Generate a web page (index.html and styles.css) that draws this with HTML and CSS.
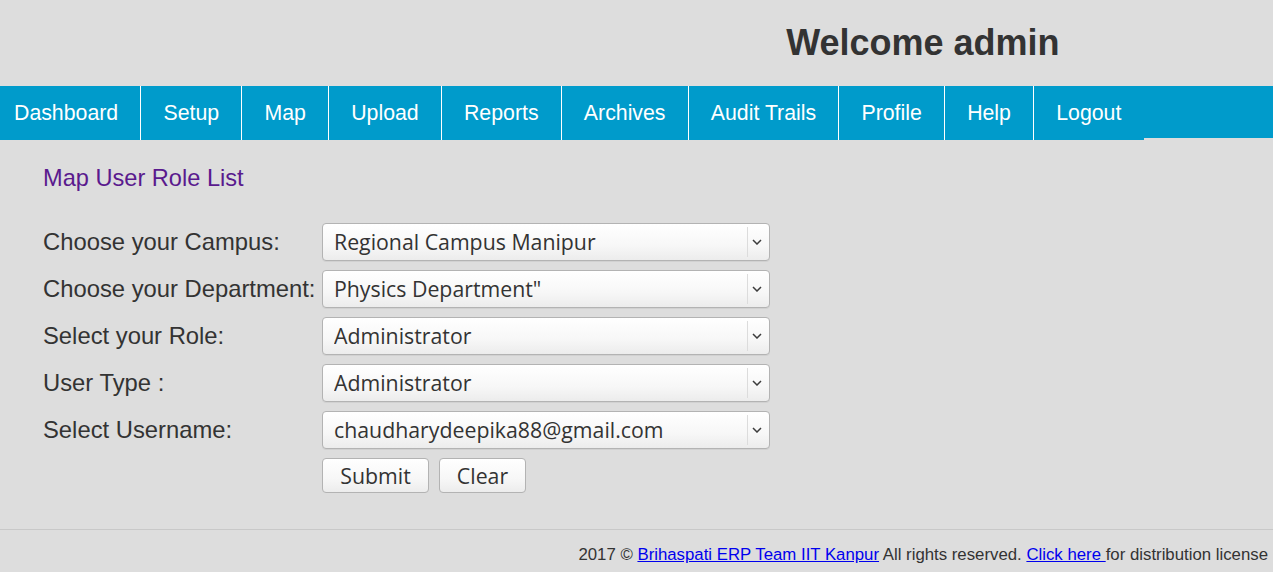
FILE: index.html
```html
<!DOCTYPE html>
<html>
<head>
<meta charset="utf-8">
<title>Map User Role List</title>
<link rel="stylesheet" href="styles.css">
</head>
<body>
<header class="header">
  <div class="header-left"></div>
  <h1 class="welcome">Welcome admin</h1>
</header>
<nav class="nav">
  <ul class="menu">
    <li class="menu-item first">Dashboard</li>
    <li class="menu-item">Setup</li>
    <li class="menu-item">Map</li>
    <li class="menu-item">Upload</li>
    <li class="menu-item">Reports</li>
    <li class="menu-item">Archives</li>
    <li class="menu-item">Audit Trails</li>
    <li class="menu-item">Profile</li>
    <li class="menu-item">Help</li>
    <li class="menu-item last">Logout</li>
  </ul>
</nav>
<main class="content">
  <h2 class="title">Map User Role List</h2>
  <form class="form">
    <label class="label">Choose your Campus:</label>
    <div class="select-wrap">
      <select class="select"><option>Regional Campus Manipur</option></select>
      <span class="sep"></span>
      <svg class="chev" width="10" height="6" viewBox="0 0 10 6"><path d="M1 1 L5 5 L9 1" fill="none" stroke="#3c3c3c" stroke-width="1.5"/></svg>
    </div>
    <label class="label">Choose your Department:</label>
    <div class="select-wrap">
      <select class="select"><option>Physics Department"</option></select>
      <span class="sep"></span>
      <svg class="chev" width="10" height="6" viewBox="0 0 10 6"><path d="M1 1 L5 5 L9 1" fill="none" stroke="#3c3c3c" stroke-width="1.5"/></svg>
    </div>
    <label class="label">Select your Role:</label>
    <div class="select-wrap">
      <select class="select"><option>Administrator</option></select>
      <span class="sep"></span>
      <svg class="chev" width="10" height="6" viewBox="0 0 10 6"><path d="M1 1 L5 5 L9 1" fill="none" stroke="#3c3c3c" stroke-width="1.5"/></svg>
    </div>
    <label class="label">User Type :</label>
    <div class="select-wrap">
      <select class="select"><option>Administrator</option></select>
      <span class="sep"></span>
      <svg class="chev" width="10" height="6" viewBox="0 0 10 6"><path d="M1 1 L5 5 L9 1" fill="none" stroke="#3c3c3c" stroke-width="1.5"/></svg>
    </div>
    <label class="label">Select Username:</label>
    <div class="select-wrap">
      <select class="select"><option>chaudharydeepika88@gmail.com</option></select>
      <span class="sep"></span>
      <svg class="chev" width="10" height="6" viewBox="0 0 10 6"><path d="M1 1 L5 5 L9 1" fill="none" stroke="#3c3c3c" stroke-width="1.5"/></svg>
    </div>
    <div class="spacer"></div>
    <div class="buttons">
      <button type="button" class="btn btn-submit">Submit</button>
      <button type="button" class="btn btn-clear">Clear</button>
    </div>
  </form>
</main>
<footer class="footer">
  <p class="footer-text">2017 © <a class="link" href="#">Brihaspati ERP Team IIT Kanpur</a> All rights reserved. <a class="link" href="#">Click here </a>for distribution license</p>
</footer>
</body>
</html>
```

FILE: styles.css
```css
html, body {
  margin: 0;
  padding: 0;
}
body {
  background: #dddddd;
  font-family: "Liberation Sans", Arial, sans-serif;
  color: #333333;
  height: 572px;
  overflow: hidden;
}
.header {
  display: grid;
  grid-template-columns: 45% 55%;
  height: 86px;
  box-sizing: border-box;
  padding-top: 25px;
}
.welcome {
  margin: 0;
  text-align: center;
  font-size: 36px;
  line-height: 36px;
  font-weight: bold;
  color: #333333;
}
.nav {
  height: 52px;
  background: #009bcb;
}
.menu {
  list-style: none;
  margin: 0;
  padding: 0;
  display: flex;
}
.menu-item {
  height: 54px;
  line-height: 54px;
  padding: 0 22.3px 0 22px;
  font-size: 21.3px;
  color: #ffffff;
  background: #009bcb;
  border-right: 1px solid #ffffff;
  white-space: nowrap;
}
.menu-item.first {
  padding-left: 14px;
}
.menu-item.last {
  border-right: none;
}
.content {
  padding: 26px 43px 0;
}
.title {
  margin: 0 0 31px;
  font-size: 23.6px;
  line-height: 28px;
  font-weight: normal;
  color: #5a1a8e;
}
.form {
  display: grid;
  grid-template-columns: 279px 448px;
  row-gap: 9px;
  align-items: center;
}
.label {
  font-size: 23.8px;
  color: #333333;
  white-space: nowrap;
}
.select-wrap {
  position: relative;
  height: 38px;
}
.select {
  -webkit-appearance: none;
  appearance: none;
  width: 448px;
  height: 38px;
  box-sizing: border-box;
  margin: 0;
  border: 1px solid #b3b3b3;
  border-radius: 4px;
  background: linear-gradient(#ffffff, #f7f7f7 60%, #ececec);
  box-shadow: 0 1px 0 rgba(0,0,0,0.05);
  padding: 0 0 2px 11px;
  font-family: "Open Sans", "Noto Sans", sans-serif;
  font-size: 21.3px;
  color: #333333;
}
.sep {
  position: absolute;
  left: 425px;
  top: 4px;
  bottom: 4px;
  width: 1px;
  background: #dcdcdc;
}
.chev {
  position: absolute;
  left: 430px;
  top: 16px;
}
.buttons {
  display: flex;
  gap: 10px;
}
.btn {
  height: 35px;
  box-sizing: border-box;
  margin: 0;
  border: 1px solid #b3b3b3;
  border-radius: 4px;
  background: linear-gradient(#ffffff, #f7f7f7 60%, #ececec);
  font-family: "Open Sans", "Noto Sans", sans-serif;
  font-size: 21.3px;
  color: #333333;
  padding: 0;
}
.btn-submit {
  width: 107px;
}
.btn-clear {
  width: 87px;
}
.footer {
  margin-top: 36px;
  border-top: 1px solid #c8c8c8;
}
.footer-text {
  margin: 0;
  padding: 13px 5px 0 0;
  text-align: right;
  font-size: 16.8px;
  line-height: 24px;
  color: #333333;
}
.link {
  color: #0000ee;
  text-decoration: underline;
}
```
